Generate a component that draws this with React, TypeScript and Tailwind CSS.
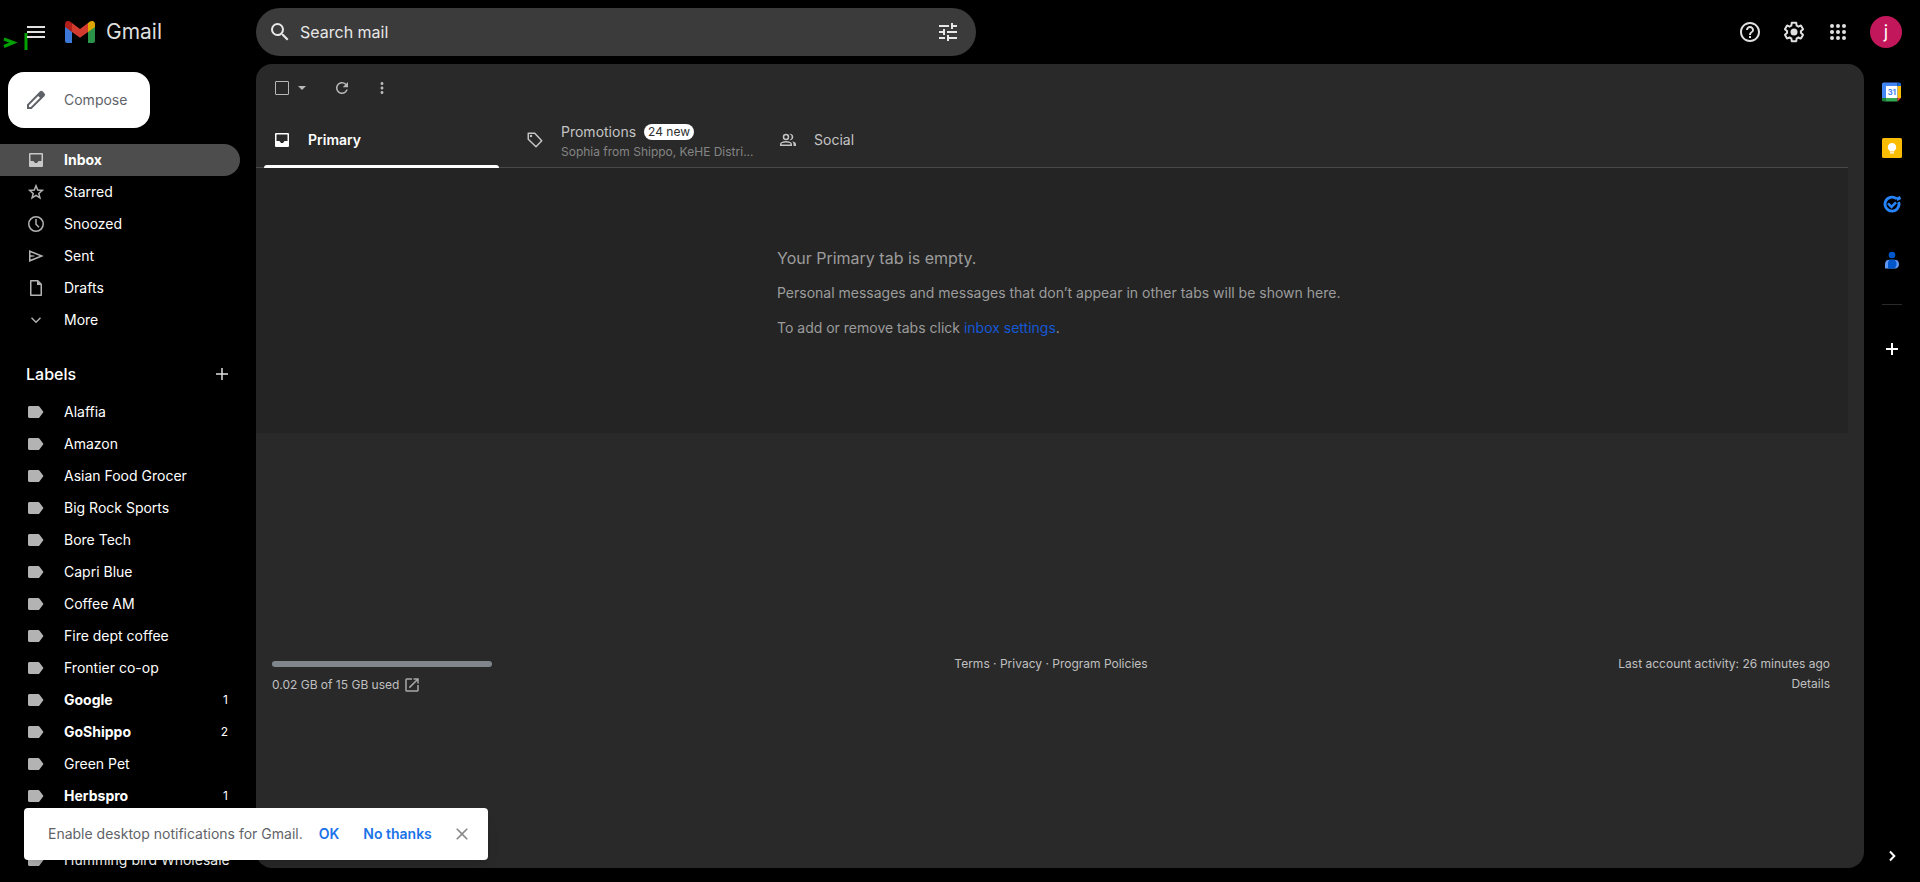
import { useState } from "react";
import type { ReactNode } from "react";
import { MdApps, MdClose, MdHelpOutline, MdMoreVert, MdOpenInNew, MdRefresh, MdSearch, MdTune } from "react-icons/md";

type LabelItem = { name: string; count?: number };

const labels: LabelItem[] = [
  { name: "Alaffia" },
  { name: "Amazon" },
  { name: "Asian Food Grocer" },
  { name: "Big Rock Sports" },
  { name: "Bore Tech" },
  { name: "Capri Blue" },
  { name: "Coffee AM" },
  { name: "Fire dept coffee" },
  { name: "Frontier co-op" },
  { name: "Google", count: 1 },
  { name: "GoShippo", count: 2 },
  { name: "Green Pet" },
  { name: "Herbspro", count: 1 },
];

function Icon({ children, className = "" }: { children: ReactNode; className?: string }) {
  return (
    <svg viewBox="0 0 20 20" width="20" height="20" fill="currentColor" className={`shrink-0 ${className}`} aria-hidden="true">
      {children}
    </svg>
  );
}

function InboxIcon({ className }: { className?: string }) {
  return (
    <Icon className={className}>
      <path
        fillRule="evenodd"
        d="M4 3h12a1 1 0 0 1 1 1v12a1 1 0 0 1-1 1H4a1 1 0 0 1-1-1V4a1 1 0 0 1 1-1zm.500 1.500v6.500h3L9 13h2l1.500-2h3V4.500z"
      />
    </Icon>
  );
}

function LabelIcon() {
  return (
    <Icon className="text-[#b3b3b3]">
      <path d="M3.500 4h8.700c.5 0 .9.200 1.200.6L17.500 10l-4.100 5.400c-.3.400-.7.600-1.200.600H3.500C2.700 16 2 15.300 2 14.500v-9C2 4.700 2.700 4 3.500 4z" />
    </Icon>
  );
}

const navItems = [
  { name: "Inbox", icon: <InboxIcon className="text-[#c8c8c8]" /> },
  {
    name: "Starred",
    icon: (
      <Icon className="text-[#b3b3b3]">
        <path d="M10 3.800l1.700 4.300 4.600.3-3.500 3 1.100 4.500-3.900-2.500-3.900 2.500 1.100-4.500-3.500-3 4.600-.3z" fill="none" stroke="currentColor" strokeWidth="1.5" />
      </Icon>
    ),
  },
  {
    name: "Snoozed",
    icon: (
      <Icon className="text-[#b3b3b3]">
        <g fill="none" stroke="currentColor" strokeWidth="1.5">
          <circle cx="10" cy="10" r="7.250" />
          <path d="M10 5v5.200l3 3" />
        </g>
      </Icon>
    ),
  },
  {
    name: "Sent",
    icon: (
      <Icon className="text-[#b3b3b3]">
        <path d="M3.750 5.200L15.800 10 3.750 14.800z" fill="none" stroke="currentColor" strokeWidth="1.5" />
        <path d="M4 9.200l4.500.8L4 10.800z" stroke="currentColor" strokeWidth=".5" />
      </Icon>
    ),
  },
  {
    name: "Drafts",
    icon: (
      <Icon className="text-[#b3b3b3]">
        <path d="M4.750 2.750h7l3.500 3.500v11H4.750z" fill="none" stroke="currentColor" strokeWidth="1.5" strokeLinejoin="round" />
        <path d="M11 2.500V7h4.500z" />
      </Icon>
    ),
  },
  {
    name: "More",
    icon: (
      <Icon className="text-[#b3b3b3]">
        <path d="M5.500 7.800l4.500 4.500 4.500-4.500" fill="none" stroke="currentColor" strokeWidth="1.4" />
      </Icon>
    ),
  },
];

function GmailLogo() {
  return (
    <svg viewBox="0 0 30 22" width="30" height="22" aria-hidden="true">
      <path d="M0 5l7 5v12H2a2 2 0 0 1-2-2z" fill="#3c78d8" />
      <path d="M30 5l-7 5v12h5a2 2 0 0 0 2-2z" fill="#2b9348" />
      <path d="M23 2l2-1.400C27.300-1 30 .6 30 3.300V6l-7 5z" fill="#dfa500" />
      <path d="M7 2l8 6 8-6v9l-8 5.800L7 11z" fill="#d33b2f" />
      <path d="M7 2L5 .600C2.700-1 0 .6 0 3.300V6l7 5z" fill="#b01f1a" />
    </svg>
  );
}

function GearIcon() {
  return (
    <svg viewBox="0 0 24 24" width="24" height="24" fill="currentColor" aria-hidden="true">
      <path d="M13.850 22.250h-3.700c-.74 0-1.360-.54-1.450-1.270l-.27-1.890c-.27-.14-.53-.29-.79-.46l-1.800.72c-.7.260-1.470-.03-1.810-.65L2.200 15.530c-.35-.66-.2-1.440.36-1.880l1.530-1.190c-.01-.15-.02-.3-.02-.46 0-.15.010-.31.020-.46l-1.520-1.190c-.59-.45-.74-1.260-.37-1.880l1.850-3.190c.34-.62 1.110-.9 1.790-.63l1.810.73c.26-.17.520-.32.780-.46l.27-1.910c.09-.7.710-1.250 1.440-1.250h3.700c.74 0 1.360.54 1.450 1.270l.27 1.890c.27.140.53.290.79.460l1.800-.72c.71-.26 1.480.03 1.820.65l1.840 3.180c.36.660.2 1.440-.36 1.880l-1.520 1.190c.01.150.02.300.02.460s-.01.310-.02.460l1.520 1.190c.56.450.72 1.230.37 1.860l-1.860 3.220c-.34.620-1.110.9-1.800.63l-1.800-.72c-.26.170-.52.320-.78.460l-.27 1.910c-.1.680-.72 1.220-1.460 1.220zm-3.230-2h2.760l.37-2.550.53-.22c.44-.18.880-.44 1.340-.78l.45-.34 2.380.96 1.380-2.400-2.030-1.580.07-.56c.03-.26.060-.51.060-.78s-.03-.53-.06-.78l-.07-.56 2.030-1.580-1.390-2.400-2.390.96-.45-.35c-.42-.32-.87-.58-1.330-.77l-.52-.22-.37-2.550h-2.760l-.37 2.550-.53.210c-.44.190-.88.440-1.340.79l-.45.330-2.380-.95-1.390 2.390 2.030 1.580-.07.560a7 7 0 0 0-.06.790c0 .260.020.530.060.780l.07.560-2.030 1.580 1.380 2.400 2.390-.96.450.350c.43.330.86.580 1.330.77l.53.220z" />
      <circle cx="12" cy="12" r="3.500" />
    </svg>
  );
}

function Header() {
  return (
    <header className="flex h-16 shrink-0 items-center pr-[18px]">
      <div className="relative flex w-64 shrink-0 items-center pl-6">
        <svg viewBox="0 0 32 24" width="32" height="24" className="absolute left-0 top-[11px]" fill="none" stroke="#00a000" aria-hidden="true">
          <path d="M4 8l9.500 3.500L4 15.500" strokeWidth="3" />
          <path d="M26 2v17" strokeWidth="3" />
        </svg>
        <button aria-label="Main menu" className="relative text-[#e0e0e0]">
          <svg viewBox="0 0 24 24" width="24" height="24" fill="currentColor">
            <path d="M3 6h18v2H3zM3 11h18v2H3zM3 16h18v2H3z" />
          </svg>
        </button>
        <a href="#inbox" className="ml-[17px] flex items-center gap-[11px] text-[21px] leading-6 text-[#dedede]">
          <GmailLogo />
          Gmail
        </a>
      </div>
      <form className="flex h-12 w-[720px] items-center rounded-full bg-[#3b3b3b] px-3 text-[#e8e8e8]" onSubmit={(e) => e.preventDefault()}>
        <button aria-label="Search" className="mr-2 shrink-0">
          <MdSearch size={24} />
        </button>
        <input aria-label="Search mail" placeholder="Search mail" className="min-w-0 flex-1 bg-transparent text-base outline-none placeholder:text-[#e8e8e8]" />
        <button type="button" aria-label="Show search options" className="mr-1 shrink-0">
          <MdTune size={24} />
        </button>
      </form>
      <div className="ml-auto flex items-center gap-5 text-[#e0e0e0]">
        <button aria-label="Support">
          <MdHelpOutline size={24} />
        </button>
        <button aria-label="Settings">
          <GearIcon />
        </button>
        <button aria-label="Google apps">
          <svg viewBox="0 0 24 24" width="24" height="24" fill="currentColor">
            {[6, 12, 18].map((y) => [6, 12, 18].map((x) => <circle key={`${x}-${y}`} cx={x} cy={y} r="2" />))}
          </svg>
        </button>
        <button aria-label="Account" className="flex h-8 w-8 items-center justify-center rounded-full bg-[#c2185b] text-lg text-white">
          j
        </button>
      </div>
    </header>
  );
}

function Sidebar() {
  const [active, setActive] = useState("Inbox");

  return (
    <aside className="w-64 shrink-0 pt-2">
      <button className="ml-2 flex h-14 w-[142px] items-center rounded-2xl bg-white pl-4 text-sm text-[#5f6368]">
        <svg viewBox="0 0 24 24" width="24" height="24" fill="currentColor" className="mr-4">
          <path
            fillRule="evenodd"
            d="M20.400 5.200l-1.600-1.600a2.100 2.100 0 0 0-3 0L3 16.400V21h4.600L20.400 8.200a2.100 2.100 0 0 0 0-3zM6.800 19H5v-1.800L14.200 8 16 9.800z"
          />
        </svg>
        Compose
      </button>
      <nav className="mt-4">
        {navItems.map((item) => (
          <a
            key={item.name}
            href={`#${item.name.toLowerCase()}`}
            onClick={() => setActive(item.name)}
            className={`mr-4 flex h-8 items-center gap-[18px] rounded-r-full pl-[26px] text-sm text-white ${active === item.name ? "bg-[#4d4d4d] font-bold" : ""}`}
          >
            {item.icon}
            {item.name}
          </a>
        ))}
      </nav>
      <div className="mr-4 mt-[22px] flex h-8 items-center justify-between pl-[26px] pr-2 text-white">
        <h2 className="text-base font-medium">Labels</h2>
        <button aria-label="Create new label" className="text-[#e0e0e0]">
          <Icon>
            <path d="M9.250 4h1.500v5.250H16v1.500h-5.250V16h-1.500v-5.250H4v-1.500h5.250z" />
          </Icon>
        </button>
      </div>
      <nav className="mt-1.5">
        {labels.map((label) => (
          <a
            key={label.name}
            href="#label"
            className={`mr-4 flex h-8 items-center gap-[18px] pl-[26px] pr-3 text-sm text-white ${label.count ? "font-bold" : ""}`}
          >
            <LabelIcon />
            <span className="flex-1">{label.name}</span>
            {label.count && <span className="text-xs font-normal">{label.count}</span>}
          </a>
        ))}
        <a href="#label" className="mr-4 mt-8 flex h-8 items-center gap-[18px] whitespace-nowrap pl-[26px] text-sm text-white">
          <LabelIcon />
          Humming bird Wholesale
        </a>
      </nav>
    </aside>
  );
}

function Toolbar() {
  return (
    <div className="flex h-12 items-center pl-[19px] text-[#b8b8b8]">
      <input type="checkbox" aria-label="Select" className="h-3.5 w-3.5 appearance-none rounded-[1px] border border-[#b8b8b8]" />
      <button aria-label="Select options" className="ml-[3px]">
        <Icon>
          <path d="M6 8h8l-4 4z" />
        </Icon>
      </button>
      <button aria-label="Refresh" className="ml-[21px]">
        <MdRefresh size={18} />
      </button>
      <button aria-label="More" className="ml-[22px]">
        <MdMoreVert size={18} />
      </button>
    </div>
  );
}

function Tabs() {
  return (
    <div role="tablist" className="mr-4 flex h-14 border-b border-[#484848] text-sm text-[#c4c4c4]">
      <button role="tab" aria-selected="true" className="relative flex w-[253px] items-center gap-4 pl-4 font-semibold text-white">
        <InboxIcon />
        Primary
        <span className="absolute -bottom-px left-2 right-2.5 h-[3px] rounded-t bg-white" />
      </button>
      <button role="tab" aria-selected="false" className="flex w-[253px] items-center gap-4 pl-4 text-left">
        <Icon>
          <path d="M3.250 3.250h6.500l7 7.500-5.750 6-7.750-7.500z" fill="none" stroke="currentColor" strokeWidth="1.5" strokeLinejoin="round" />
          <circle cx="6" cy="6" r="1.200" />
        </Icon>
        <span className="whitespace-nowrap pt-1">
          <span className="flex items-center gap-2 leading-4">
            Promotions
            <span className="rounded-full bg-white px-1 text-xs leading-4 text-[#303030]">24 new</span>
          </span>
          <span className="block pt-1 text-xs leading-4 text-[#858585]">Sophia from Shippo, KeHE Distri...</span>
        </span>
      </button>
      <button role="tab" aria-selected="false" className="flex w-[253px] items-center gap-4 pl-4">
        <Icon>
          <g fill="none" stroke="currentColor" strokeWidth="1.5">
            <circle cx="8" cy="7" r="2.500" />
            <path d="M2.750 15.250v-1.200c0-1.400 3-2.300 5.250-2.300s5.250.9 5.250 2.300v1.200z" />
          </g>
          <path d="M11.300 10.100a3.200 3.200 0 0 0 0-6.200 3.200 3.200 0 1 1 0 6.200zM14 11.300c2 .4 4 1.300 4 2.900V16h-2.500v-1.800c0-1.200-.6-2.200-1.500-2.900z" />
        </Icon>
        Social
      </button>
    </div>
  );
}

function Footer() {
  return (
    <footer className="mr-4 mt-[221px] grid grid-cols-3 pl-4 pr-[18px] text-xs leading-5 text-[#c0c0c0]">
      <div className="pt-[7px]">
        <div className="h-1.5 w-[220px] rounded-full bg-[#80868b]" />
        <div className="mt-2 flex items-center gap-1">
          0.02 GB of 15 GB used
          <a href="#storage" aria-label="Manage storage" className="text-[#a8a8a8]">
            <MdOpenInNew size={18} />
          </a>
        </div>
      </div>
      <p className="text-center">
        <a href="#terms">Terms</a> · <a href="#privacy">Privacy</a> · <a href="#policies">Program Policies</a>
      </p>
      <div className="text-right">
        Last account activity: 26 minutes ago
        <br />
        <a href="#details">Details</a>
      </div>
    </footer>
  );
}

function SidePanel() {
  return (
    <aside className="flex w-14 shrink-0 flex-col items-center pb-4 pt-[18px]">
      <div className="flex flex-col gap-9">
        <button aria-label="Calendar">
          <Icon>
            <path d="M0 2a1.500 1.500 0 0 1 1.500-1.500H15.500V4H4v12H0z" fill="#4285f4" />
            <path d="M15.500.5h2A1.500 1.500 0 0 1 19 2v2h-3.500z" fill="#1967d2" />
            <path d="M15.500 4H19v12h-3.500z" fill="#fbbc04" />
            <path d="M4 16h11.500v3.500H4z" fill="#34a853" />
            <path d="M0 16h4v3.500H1.500A1.500 1.500 0 0 1 0 18z" fill="#188038" />
            <path d="M15.500 16H19l-3.500 3.500z" fill="#ea4335" />
            <path d="M4 4h11.500v12H4z" fill="#fff" />
            <text x="9.700" y="13" textAnchor="middle" fontSize="8" fontWeight="700" fill="#4285f4">31</text>
          </Icon>
        </button>
        <button aria-label="Keep">
          <Icon>
            <rect width="20" height="20" rx="1.500" fill="#fbbc04" />
            <path d="M10 5a4.200 4.200 0 0 1 2.300 7.700V13.500H7.700v-.8A4.200 4.200 0 0 1 10 5zM8 14.300h4v1.300H8z" fill="#fff" />
          </Icon>
        </button>
        <button aria-label="Tasks">
          <Icon>
            <g fill="none" stroke="#2684fc">
              <path d="M14.500 4.700a7 7 0 1 0 2.200 3.300" strokeWidth="2.800" />
              <path d="M6 9.300l3.500 3.500L14 8.300" strokeWidth="2.600" />
              <path d="M14.500 5.500L18.500 3.500" strokeWidth="3.200" />
            </g>
          </Icon>
        </button>
        <button aria-label="Contacts">
          <Icon>
            <circle cx="10" cy="5" r="3.300" fill="#0057cc" />
            <path d="M3 18.500v-4.500A4.500 4.500 0 0 1 7.500 9.700h5a4.500 4.500 0 0 1 4.500 4.300c0 2.800-1.500 4.500-4 4.500z" fill="#5e97f6" />
            <path d="M6 18.500v-5c0-2 1-3.700 2.500-3.700h3c1.800 0 3 1.700 3 4s-1 4.700-3 4.700z" fill="#0057cc" />
          </Icon>
        </button>
      </div>
      <hr className="mt-[34px] w-5 border-[#2a2a2a]" />
      <button aria-label="Get add-ons" className="mt-[34px] text-white">
        <Icon>
          <path d="M9 4h2v5h5v2h-5v5H9v-5H4V9h5z" />
        </Icon>
      </button>
      <button aria-label="Hide side panel" className="mt-auto text-white">
        <Icon>
          <path d="M8 5.500l4.300 4.500L8 14.500" fill="none" stroke="currentColor" strokeWidth="2" />
        </Icon>
      </button>
    </aside>
  );
}

function Notification({ onClose }: { onClose: () => void }) {
  return (
    <div role="alert" className="absolute bottom-[22px] left-6 flex h-[52px] items-center whitespace-nowrap rounded bg-white pl-6 pr-4 text-sm text-[#5f6368] shadow-lg">
      Enable desktop notifications for Gmail.
      <button onClick={onClose} className="ml-4 font-semibold text-[#1a73e8]">OK</button>
      <button onClick={onClose} className="ml-6 font-semibold text-[#1a73e8]">No thanks</button>
      <button onClick={onClose} aria-label="Close" className="ml-5 text-[#8a8a8a]">
        <MdClose size={20} />
      </button>
    </div>
  );
}

export default function App() {
  const [showNotification, setShowNotification] = useState(true);

  return (
    <div className="relative flex h-screen flex-col overflow-hidden bg-black font-[Inter,Roboto,sans-serif]">
      <Header />
      <div className="flex min-h-0 flex-1">
        <Sidebar />
        <main className="mb-3.5 min-w-0 flex-1 overflow-hidden rounded-2xl bg-[#292929]">
          <Toolbar />
          <Tabs />
          <section className="mr-4 flex h-[265px] justify-center bg-[#242424] pt-20 text-sm text-[#9c9c9c]">
            <div className="flex w-[550px] flex-col gap-[15px] whitespace-nowrap leading-5">
              <p className="text-base leading-5">Your Primary tab is empty.</p>
              <p>Personal messages and messages that don’t appear in other tabs will be shown here.</p>
              <p>
                To add or remove tabs click <a href="#settings" className="text-[#1558d6]">inbox settings</a>.
              </p>
            </div>
          </section>
          <Footer />
        </main>
        <SidePanel />
      </div>
      {showNotification && <Notification onClose={() => setShowNotification(false)} />}
    </div>
  );
}
